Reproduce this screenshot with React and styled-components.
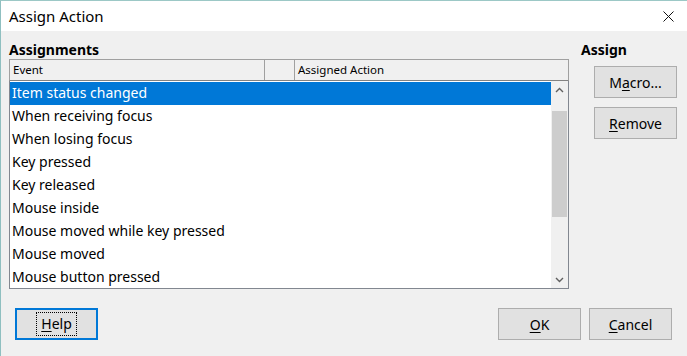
import React from 'react'
import styled, { createGlobalStyle } from 'styled-components'

const GlobalStyle = createGlobalStyle`
	html, body {
		margin: 0;
		padding: 0;
		background: #f0f0f0;
	}
	body {
		font-family: "Noto Sans", "Open Sans", sans-serif;
		color: #000;
	}
`

const events = [
	'Item status changed',
	'When receiving focus',
	'When losing focus',
	'Key pressed',
	'Key released',
	'Mouse inside',
	'Mouse moved while key pressed',
	'Mouse moved',
	'Mouse button pressed',
]

const Mn = ({ text, at }) => (
	<>
		{text.slice(0, at)}
		<u>{text[at]}</u>
		{text.slice(at + 1)}
	</>
)

const Chevron = ({ up }) => (
	<svg width="9" height="6" viewBox="0 0 9 6">
		<path
			d={up ? 'M1 5 L4.5 1.5 L8 5' : 'M1 1 L4.5 4.5 L8 1'}
			fill="none"
			stroke="#606060"
			strokeWidth="1.4"
		/>
	</svg>
)

export default function App() {
	return (
		<Window>
			<GlobalStyle />
			<TitleBar>
				<Title>Assign Action</Title>
				<CloseButton>
					<svg width="11" height="11" viewBox="0 0 11 11">
						<path d="M0.5 0.5 L10.5 10.5 M10.5 0.5 L0.5 10.5" stroke="#111" strokeWidth="1" />
					</svg>
				</CloseButton>
			</TitleBar>
			<Body>
				<Columns>
					<LeftCol>
						<SectionLabel>Assignments</SectionLabel>
						<Table>
							<HeaderRow>
								<HeaderCell $width={255}>Event</HeaderCell>
								<HeaderCell $width={30} />
								<HeaderCell $grow>Assigned Action</HeaderCell>
							</HeaderRow>
							<ListBox>
								<Rows>
									{events.map((e, i) => (
										<Row key={e} $selected={i === 0}>{e}</Row>
									))}
								</Rows>
								<ScrollBar>
									<ScrollArrow><Chevron up /></ScrollArrow>
									<Track>
										<Thumb />
									</Track>
									<ScrollArrow><Chevron /></ScrollArrow>
								</ScrollBar>
							</ListBox>
						</Table>
					</LeftCol>
					<RightCol>
						<SectionLabel>Assign</SectionLabel>
						<SideButtons>
							<Button><Mn text="Macro..." at={1} /></Button>
							<Button><Mn text="Remove" at={0} /></Button>
						</SideButtons>
					</RightCol>
				</Columns>
				<Footer>
					<Button $default>
						<Focus><Mn text="Help" at={0} /></Focus>
					</Button>
					<FooterRight>
						<Button><Mn text="OK" at={0} /></Button>
						<Button><Mn text="Cancel" at={0} /></Button>
					</FooterRight>
				</Footer>
			</Body>
		</Window>
	)
}

const Window = styled.div`
	width: 687px;
	height: 356px;
	box-sizing: border-box;
	display: flex;
	flex-direction: column;
	background: #f0f0f0;
	border-left: 1px solid #8fbfc0;
	border-top: 1px solid #9cc8c6;
	overflow: hidden;
`

const TitleBar = styled.div`
	height: 30px;
	flex: none;
	background: #fff;
	display: flex;
	align-items: center;
	justify-content: space-between;
	padding: 0 0 0 8px;
`

const Title = styled.div`
	font-size: 15px;
	padding-bottom: 1px;
`

const CloseButton = styled.div`
	width: 46px;
	height: 30px;
	display: flex;
	align-items: center;
	justify-content: center;
	margin-right: -4px;
`

const Body = styled.div`
	flex: 1;
	display: flex;
	flex-direction: column;
	padding: 8px 0 0 8px;
`

const Columns = styled.div`
	display: flex;
	gap: 12px;
`

const LeftCol = styled.div`
	width: 560px;
	display: flex;
	flex-direction: column;
`

const RightCol = styled.div`
	display: flex;
	flex-direction: column;
`

const SectionLabel = styled.div`
	font-size: 14px;
	font-weight: bold;
	height: 20px;
	line-height: 21px;
`

const Table = styled.div`
	display: flex;
	flex-direction: column;
`

const HeaderRow = styled.div`
	height: 20px;
	display: flex;
	border: 1px solid #a0a0a0;
	border-bottom-color: #828282;
	background: #f0f0f0;
	box-sizing: content-box;
`

const HeaderCell = styled.div`
	box-sizing: border-box;
	width: ${p => (p.$width ? `${p.$width}px` : 'auto')};
	flex: ${p => (p.$grow ? 1 : 'none')};
	font-size: 11.5px;
	line-height: 20px;
	padding-left: 3px;
	border-right: ${p => (p.$grow ? 'none' : '1px solid #a0a0a0')};
	white-space: nowrap;
`

const ListBox = styled.div`
	height: 207px;
	display: flex;
	border: 1px solid #828790;
	border-top: none;
	background: #fff;
`

const Rows = styled.div`
	flex: 1;
	padding: 1px 0 0 0;
`

const Row = styled.div`
	height: 23px;
	line-height: 22px;
	font-size: 14px;
	padding-left: 2px;
	white-space: nowrap;
	background: ${p => (p.$selected ? '#0078d7' : 'transparent')};
	color: ${p => (p.$selected ? '#fff' : '#000')};
`

const ScrollBar = styled.div`
	width: 17px;
	display: flex;
	flex-direction: column;
	background: #f0f0f0;
`

const ScrollArrow = styled.div`
	height: 17px;
	display: flex;
	align-items: center;
	justify-content: center;
`

const Track = styled.div`
	flex: 1;
	padding: 13px 1px 0 1px;
`

const Thumb = styled.div`
	height: 106px;
	background: #cdcdcd;
`

const SideButtons = styled.div`
	display: flex;
	flex-direction: column;
	gap: 9px;
	padding: 7px 0 0 13px;
`

const Button = styled.div`
	width: 83px;
	height: 32px;
	box-sizing: border-box;
	background: #e1e1e1;
	border: ${p => (p.$default ? '2px solid #0078d7' : '1px solid #adadad')};
	display: flex;
	align-items: center;
	justify-content: center;
	font-size: 14px;
	u {
		text-decoration-thickness: 1px;
		text-underline-offset: 2px;
	}
`

const Focus = styled.div`
	outline: 1px dotted #000;
	padding: 1px 4px;
	line-height: 20px;
`

const Footer = styled.div`
	display: flex;
	justify-content: space-between;
	padding: 19px 15px 0 6px;
`

const FooterRight = styled.div`
	display: flex;
	gap: 8px;
`
